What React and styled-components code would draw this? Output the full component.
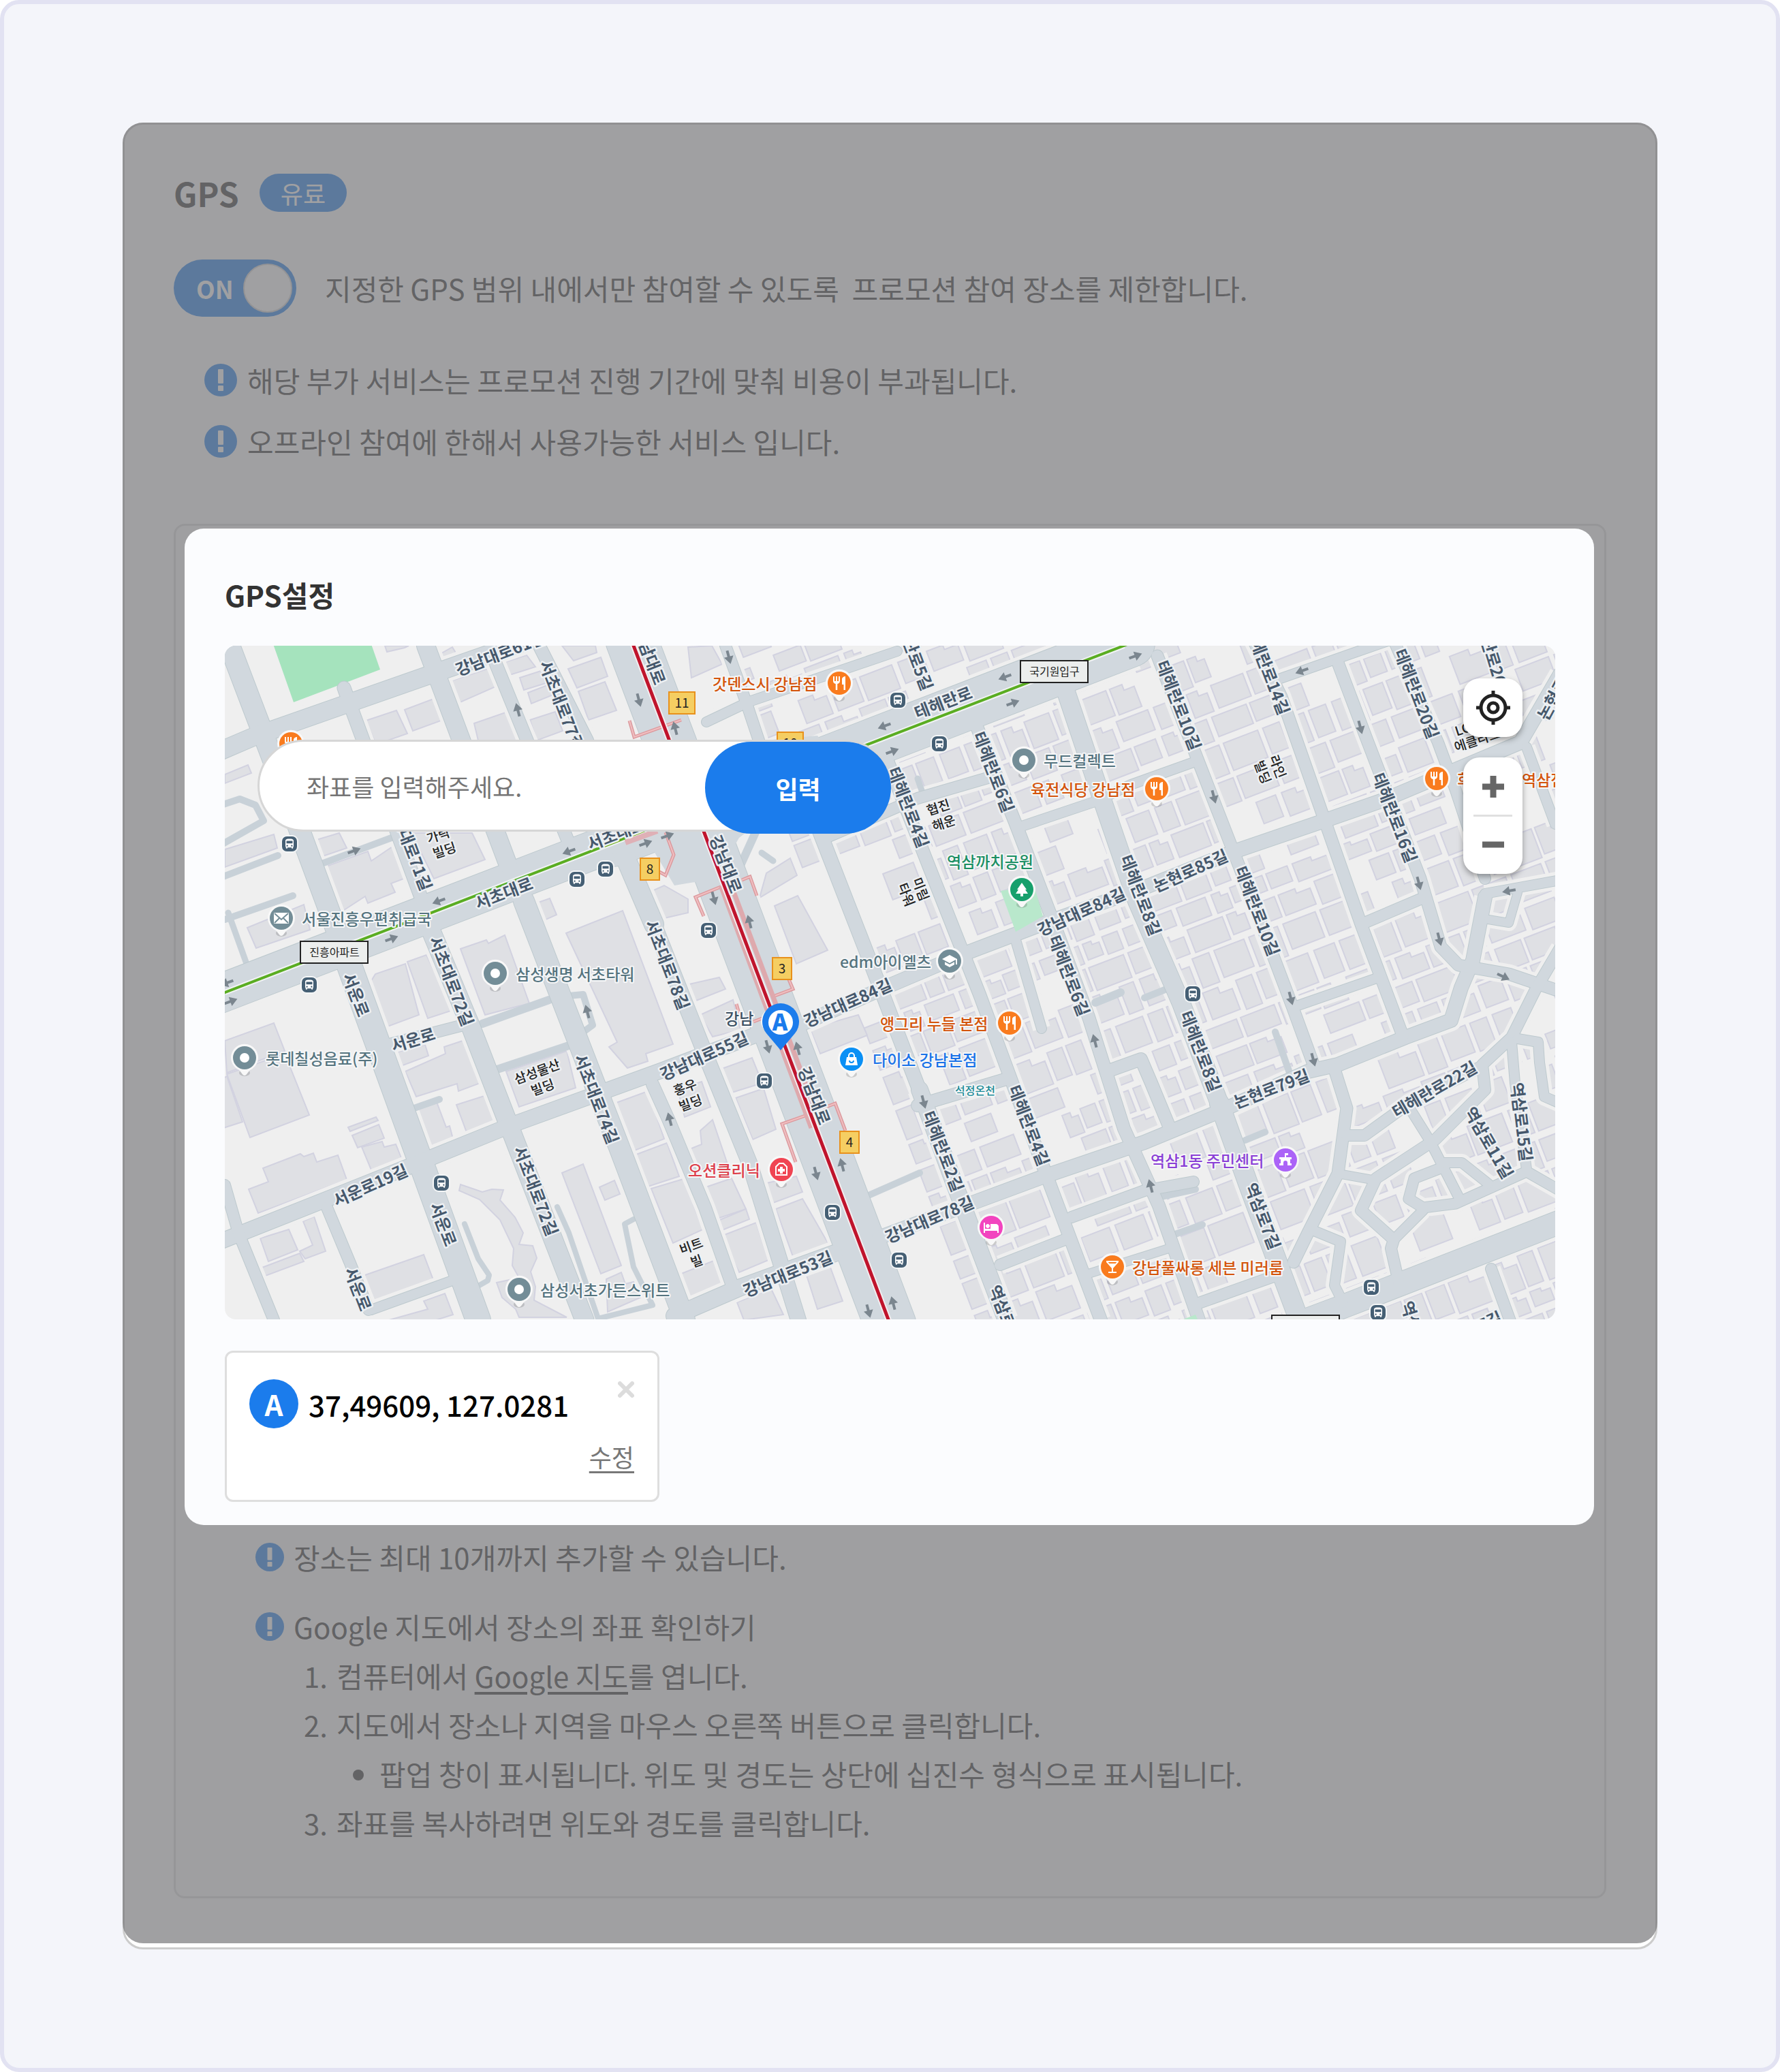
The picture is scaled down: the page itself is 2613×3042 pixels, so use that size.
import React, { useState } from 'react';
import styled, { createGlobalStyle } from 'styled-components';
import {
  MdRestaurant,
  MdLocalBar,
  MdPark,
  MdSchool,
  MdHotel,
  MdDirectionsBus,
} from 'react-icons/md';

const GlobalStyle = createGlobalStyle`
  * {
    box-sizing: border-box;
  }
  body {
    margin: 0;
    background: #fff;
    color: #333;
    font-family: 'Noto Sans CJK KR', 'Noto Sans', sans-serif;
    font-size: 42px;
  }
  button, input {
    font-family: inherit;
  }
`;

const Page = styled.main`
  min-height: 100vh;
  padding: 174px;
  border: 6px solid #e2e2f2;
  border-radius: 28px;
  background: #f4f5fa;
`;

const Card = styled.section`
  position: relative;
  padding: 72px;
  border: 3px solid #ccc;
  border-radius: 30px;
  background: #fff;
`;

const Scrim = styled.div`
  position: absolute;
  inset: -3px -3px 6px;
  z-index: 1;
  border-radius: 30px;
  background: rgba(119, 120, 122, 0.7);
`;

const Heading = styled.div`
  display: flex;
  align-items: center;
  gap: 30px;
  height: 56px;
  margin-bottom: 70px;
`;

const Title = styled.h1`
  margin: 0;
  font-size: 48px;
  line-height: 56px;
`;

const PaidBadge = styled.span`
  padding: 0 31px;
  border-radius: 28px;
  background: #1b7cec;
  color: #fff;
  font-size: 36px;
  line-height: 56px;
`;

const SwitchRow = styled.label`
  display: flex;
  align-items: center;
  gap: 42px;
  margin-bottom: 48px;
  line-height: 84px;
  white-space: pre-wrap;
`;

const Switch = styled.span`
  display: flex;
  align-items: center;
  justify-content: space-between;
  flex: none;
  width: 180px;
  height: 84px;
  padding: 0 6px 0 33px;
  border-radius: 42px;
  background: #1b7cec;
  color: #fff;
  font-size: 36px;
  font-weight: 700;
`;

const SwitchInput = styled.input`
  appearance: none;
  width: 72px;
  height: 72px;
  margin: 0;
  border: 2px solid #d4d4d4;
  border-radius: 50%;
  background: #fff;
`;

const Notices = styled.ul`
  margin: 0 0 76px;
  padding: 0 0 0 45px;
  list-style: none;
`;

const Notice = styled.li`
  display: flex;
  align-items: center;
  gap: 15px;
  line-height: 90px;
`;

const Section = styled.div`
  padding: 4px 15px 72px 13px;
  border: 3px solid #dcdcdc;
  border-radius: 16px;
  background: #fafbfc;
`;

const Dialog = styled.div`
  position: relative;
  z-index: 2;
  margin-bottom: 11px;
  padding: 67px 57px 34px 59px;
  border-radius: 28px;
  background: #fbfcfe;
`;

const DialogTitle = styled.h2`
  margin: 0 0 45px;
  font-size: 42px;
  line-height: 60px;
`;

const MapFrame = styled.div`
  position: relative;
  overflow: hidden;
  margin-bottom: 46px;
  border-radius: 16px;
`;

const MapCanvas = styled.svg`
  display: block;
  width: 100%;
  height: auto;
  background: #efefef;
`;

const SearchForm = styled.form`
  position: absolute;
  top: 138px;
  left: 48px;
  display: flex;
  width: 930px;
`;

const SearchInput = styled.input`
  flex: 1;
  min-width: 0;
  height: 135px;
  padding: 0 69px;
  border: 3px solid #d6d6d6;
  border-radius: 68px;
  background: #fff;
  font-size: 36px;
  outline: none;
  &::placeholder {
    color: #757575;
  }
`;

const SearchButton = styled.button`
  width: 273px;
  height: 135px;
  margin: 3px 0 0 -273px;
  border: none;
  border-radius: 68px;
  background: #1b7cec;
  color: #fff;
  font-size: 36px;
  font-weight: 700;
  cursor: pointer;
`;

const MapControls = styled.div`
  position: absolute;
  top: 48px;
  right: 48px;
  display: flex;
  flex-direction: column;
  gap: 30px;
`;

const ControlGroup = styled.div`
  display: flex;
  flex-direction: column;
  align-items: center;
  width: 87px;
  padding: 2px 0;
  border-radius: 24px;
  background: #fff;
  box-shadow: 0 4px 9px rgba(0, 0, 0, 0.35);
`;

const ControlButton = styled.button`
  display: flex;
  align-items: center;
  justify-content: center;
  width: 87px;
  height: 82px;
  padding: 0;
  border: none;
  background: none;
  cursor: pointer;
`;

const ControlDivider = styled.hr`
  width: 57px;
  height: 3px;
  margin: 0;
  border: none;
  background: #e0e0e0;
`;

const PlaceCard = styled.div`
  width: 638px;
  max-width: 100%;
  padding: 39px 34px 38px 33px;
  border: 3px solid #dedede;
  border-radius: 12px;
  background: #fff;
`;

const PlaceRow = styled.div`
  display: flex;
  align-items: center;
  gap: 15px;
  height: 72px;
  margin-bottom: 15px;
`;

const PlaceBadge = styled.span`
  width: 72px;
  border-radius: 50%;
  background: #1b7cec;
  color: #fff;
  font-weight: 700;
  line-height: 72px;
  text-align: center;
`;

const PlaceText = styled.span`
  flex: 1;
  color: #000;
  font-weight: 500;
`;

const RemoveButton = styled.button`
  display: flex;
  align-self: flex-start;
  padding: 3px 0;
  border: none;
  background: none;
  cursor: pointer;
`;

const EditButton = styled.button`
  display: block;
  margin-left: auto;
  padding: 0;
  border: none;
  background: none;
  color: #777;
  font-size: 36px;
  line-height: 52px;
  text-decoration: underline;
  text-underline-offset: 6px;
  cursor: pointer;
`;

const Guide = styled.div`
  padding-left: 104px;
  line-height: 72px;
`;

const GuideLine = styled.p`
  display: flex;
  align-items: center;
  gap: 14px;
  margin: 0 0 ${({ $spaced }) => ($spaced ? '30px' : '0')};
`;

const Steps = styled.ol`
  margin: 0;
  padding-left: 119px;
  list-style: none;
  counter-reset: step;
`;

const Step = styled.li`
  counter-increment: step;
  &::before {
    content: counter(step) '.';
    display: inline-block;
    width: 48px;
    margin-left: -48px;
  }
`;

const SubSteps = styled.ul`
  margin: 0;
  padding-left: 63px;
  list-style: disc;
`;

const MapLink = styled.a`
  color: inherit;
  text-underline-offset: 6px;
`;

const RoadLabel = styled.text`
  fill: #46586c;
  stroke: #edf0f3;
  stroke-width: 5px;
  stroke-linejoin: round;
  paint-order: stroke;
  font-size: 24px;
  font-weight: 700;
  text-anchor: middle;
  dominant-baseline: central;
`;

const BuildingLabel = styled(RoadLabel)`
  fill: #222;
  font-size: 19px;
  font-weight: 500;
`;

const PlaceLabel = styled.text`
  fill: ${({ $color }) => $color};
  stroke: #f6f7f8;
  stroke-width: 4px;
  stroke-linejoin: round;
  paint-order: stroke;
  font-size: ${({ $small }) => ($small ? '16px' : '23px')};
  font-weight: 500;
`;

const BadgeText = styled.text`
  fill: #222;
  font-size: ${({ $size }) => $size}px;
  text-anchor: middle;
`;

const MarkerLetter = styled.text`
  fill: #1b7cec;
  font-size: 34px;
  font-weight: 900;
  text-anchor: middle;
`;

const SLATE = '#738d97';
const ORANGE = '#f97b1e';

// [width, points]
const roads = [
  [75, '927,940 1307,1945'],
  [56, '320,1460 944,1220'],
  [70, '900,1237 1271,1094 1660,944'],
  [30, '337,948 429,1190 515,1423'],
  [36, '505,1396 702,1938'],
  [26, '625,948 746,1270'],
  [30, '769,1323 910,1687 1005,1938'],
  [19, '505,1010 528,1073 619,1320'],
  [27, '628,1355 691,1507 749,1657 858,1938'],
  [18, '728,975 836,1240'],
  [18, '790,945 862,1087 915,1240'],
  [28, '912,1245 960,1357'],
  [22, '955,1345 1039,1557 1100,1707 1172,1938'],
  [18, '958,1592 981,1643 1035,1773 1076,1890'],
  [26, '320,1104 376,1080 647,985 790,935'],
  [16, '560,1536 680,1505'],
  [22, '320,1824 602,1712 755,1650 970,1572 1108,1520'],
  [20, '1178,1503 1303,1448 1416,1400 1529,1357 1680,1303 1812,1250 1938,1207 2030,1175 2232,1090 2290,990'],
  [14, '1037,1060 1100,1030 1317,956'],
  [16, '1065,948 1095,1030 1115,1090'],
  [16, '1212,1230 1347,1172 1450,1142'],
  [14, '1500,1213 1607,1177 1660,1152 1755,1118'],
  [14, '1877,997 1960,968 2040,940'],
  [16, '330,1740 350,1810 402,1938'],
  [16, '480,1773 515,1857 541,1923'],
  [14, '545,1923 664,1880'],
  [24, '990,1932 1087,1890 1225,1840'],
  [20, '1290,1817 1425,1767 1533,1727 1680,1677 1794,1630 1920,1573 1964,1563 2063,1523 2130,1498 2145,1450 2162,1410 2180,1317'],
  [18, '1347,1623 1481,1583'],
  [18, '1625,1573 1675,1555 1690,1590 1716,1653'],
  [16, '1468,1857 1568,1818'],
  [16, '1573,1787 1680,1748 1752,1735'],
  [12, '1598,1870 1725,1830'],
  [16, '1760,1913 1881,1870'],
  [34, '1900,1945 1972,1918 2290,1794'],
  [20, '1195,1200 1269,1390 1356,1617'],
  [24, '1350,1600 1400,1735 1477,1938'],
  [18, '1304,1120 1364,1273 1438,1460 1533,1717 1616,1938'],
  [18, '1434,1067 1490,1207 1546,1353'],
  [14, '1488,1370 1529,1510'],
  [18, '1546,1353 1598,1493 1650,1657 1701,1770 1760,1938'],
  [26, '1564,1013 1620,1180 1669,1323 1734,1473 1790,1620'],
  [28, '1790,1620 1833,1740 1907,1938'],
  [17, '1699,963 1755,1107 1825,1287 1898,1480 1929,1565'],
  [17, '1840,940 1881,1023 1942,1197 1998,1357 2059,1520'],
  [17, '1964,973 2007,1087 2085,1290 2115,1390 2141,1417 2215,1430 2283,1453'],
  [16, '2046,940 2111,1090 2137,1160 2180,1290'],
  [14, '2241,1097 2283,1210'],
  [14, '2180,1312 2290,1292'],
  [16, '1998,1357 2085,1320'],
  [14, '1903,1477 2024,1435'],
  [16, '2290,1392 2254,1453 2219,1523 2176,1563 2180,1600 2107,1673 2020,1730 1998,1777 2046,1820 2042,1833 2055,1890'],
  [17, '1959,1570 1977,1627 1964,1723 1920,1810 1899,1853'],
  [16, '1977,1667 2003,1667 2068,1620 2172,1567'],
  [14, '2068,1625 2098,1673 2141,1757'],
  [15, '2120,1713 2076,1730 2068,1760 2089,1773 2137,1767 2241,1720 2290,1748'],
  [14, '2120,1707 2146,1707 2185,1738'],
  [14, '2089,1777 2046,1820'],
  [14, '2219,1530 2224,1590 2241,1717'],
  [14, '2228,1525 2258,1530 2260,1560 2267,1610 2290,1620'],
  [14, '1929,1807 1968,1823 1959,1887 1972,1913'],
  [12, '1964,1723 2020,1733'],
  [16, '2189,1863 2219,1945'],
  [12, '2228,1310 2215,1355 2185,1350'],
];

const serviceRoads = [
  [10, '325,1182 352,1173 375,1182 387,1205 325,1240'],
  [10, '325,1288 408,1256'],
  [10, '467,1270 580,1228'],
  [10, '330,1350 430,1315'],
  [9, '335,1340 362,1415'],
  [12, '708,1503 806,1468'],
  [12, '730,1570 835,1535'],
  [10, '835,1462 856,1460 870,1505 855,1516'],
  [10, '605,1628 645,1614'],
  [8, '682,1797 702,1848 718,1872 716,1880 702,1888'],
  [8, '818,1772 835,1810 878,1936 958,1916 930,1860 920,1812 917,1797 930,1790'],
  [10, '1275,1755 1350,1722'],
  [9, '1347,1143 1357,1172'],
  [9, '1118,1252 1135,1264'],
  [12, '1085,1275 1110,1220'],
  [10, '1680,1465 1710,1453'],
  [10, '1872,1515 1893,1575'],
  [10, '1828,1674 1857,1662'],
  [12, '1608,1472 1645,1457'],
  [10, '1700,1758 1755,1746'],
  [10, '1725,1812 1765,1798'],
];

const buildings = [
  '565,948 600,948 594,951 568,957',
  '641,963 664,950 670,960 645,969',
  '661,1000 734,976 741,1002 671,1033',
  '742,972 773,962 786,979 748,991',
  '763,995 794,985 801,1003 769,1013',
  '775,1017 806,1005 812,1020 780,1033',
  '834,982 882,965 892,993 847,1010',
  '849,1015 888,1001 905,1043 864,1057',
  '537,1058 582,1043 598,1077 552,1093',
  '594,1042 639,1025 650,1057 606,1073',
  '696,1062 745,1045 760,1087 702,1087',
  '778,1057 815,1045 826,1073 788,1087',
  '825,948 874,948 876,958 842,970',
  '476,1273 540,1250 545,1264 576,1243 593,1290 574,1297 580,1310 540,1326 536,1316 502,1338',
  '458,1235 498,1223 509,1245 465,1260',
  '330,1247 402,1225 407,1245 330,1273',
  '604,1223 693,1223 712,1262 637,1290',
  '330,1137 364,1123 369,1135 330,1150',
  '363,1362 446,1328 455,1365 376,1392',
  '790,1325 807,1319 817,1343 799,1351',
  '676,1393 714,1380 717,1385 741,1373 777,1473 712,1490',
  '831,1370 914,1337 988,1533 948,1547 951,1558 921,1568 894,1537 906,1530',
  '953,1310 975,1300 1010,1320 1010,1340 975,1348',
  '545,1440 551,1430 595,1415 615,1490 569,1507',
  '598,1412 626,1402 665,1483 628,1495',
  '330,1528 402,1502 418,1543 333,1575',
  '333,1577 418,1547 454,1637 367,1670',
  '325,1585 333,1580 356,1647 325,1657',
  '578,1546 624,1534 629,1550 586,1566',
  '595,1573 654,1547 652,1537 682,1527 705,1590 673,1602 671,1591 611,1610',
  '608,1630 641,1618 655,1655 660,1653 665,1672 630,1686',
  '670,1622 714,1608 729,1650 686,1665',
  '743,1573 832,1543 845,1597 762,1625',
  '365,1746 394,1735 386,1715 441,1694 446,1698 460,1693 465,1706 496,1696 509,1732 379,1781',
  '531,1684 561,1676 564,1684 581,1680 591,1704 566,1722 548,1725',
  '517,1667 556,1651 564,1671 525,1685',
  '511,1655 552,1640 555,1645 514,1661',
  '382,1818 424,1805 437,1835 394,1852',
  '445,1793 461,1786 478,1837 448,1848 440,1837 459,1828',
  '382,1862 440,1840 446,1852 387,1874',
  '533,1873 622,1842 636,1879 548,1912',
  '571,1938 628,1922 622,1910 653,1899 665,1930 640,1938',
  '825,1722 856,1709 912,1858 882,1870',
  '880,1743 902,1733 910,1753 888,1762',
  '902,1620 951,1602 975,1672 929,1690',
  '934,1695 979,1678 997,1727 951,1742',
  '956,1745 1003,1731 1032,1805 988,1825',
  '890,1878 912,1868 918,1885 930,1882 940,1905 892,1926',
  '1003,1447 1056,1435 1065,1452 1022,1469',
  '1028,1490 1076,1468 1087,1512 1046,1522',
  '1057,1570 1104,1553 1119,1590 1071,1605',
  '1080,1612 1121,1598 1139,1658 1105,1673',
  '1121,1738 1169,1727 1178,1750 1132,1767',
  '1139,1775 1178,1760 1223,1838 1167,1853',
  '1137,1330 1171,1315 1215,1395 1169,1415',
  '1115,1318 1125,1282 1160,1260 1170,1285',
  '1189,1510 1260,1490 1273,1520 1204,1547',
  '995,1600 1030,1588 1043,1625 1005,1640',
  '1005,1690 1030,1680 1028,1660 1046,1644 1067,1706 1020,1720',
  '1030,1745 1074,1730 1095,1775 1050,1790',
  '1047,1795 1095,1775 1100,1790 1050,1810',
  '1058,1815 1110,1795 1128,1850 1085,1868',
  '1000,1870 1050,1850 1068,1890 1008,1915',
  '1082,1912 1132,1892 1150,1930 1092,1938',
  '1180,1860 1215,1850 1237,1910 1200,1922',
  '1010,950 1045,948 1060,975 1015,995',
];

const arrows = [
  [938, 1028, 75], [760, 1042, -105], [1070, 965, 75], [991, 1069, -105],
  [1475, 994, 160], [1487, 1032, -20], [1298, 1066, 160], [1310, 1103, -20],
  [1667, 963, -20], [1911, 985, 160], [1997, 1068, 75], [1782, 1170, 75],
  [2083, 1297, 75], [2113, 1379, 75], [2215, 1308, 170], [2207, 1434, 25],
  [520, 1249, -20], [644, 1323, 160], [835, 1250, 160], [948, 1238, -20],
  [980, 1227, -20], [575, 1378, -20], [339, 1470, -20], [333, 1443, 160],
  [862, 1485, -105], [983, 1643, -105], [1048, 1319, 75], [1100, 1353, -105],
  [1127, 1537, 75], [1171, 1539, -105], [1198, 1723, 75], [1236, 1710, -105],
  [1275, 1925, 75], [1311, 1913, -105], [1356, 1618, 75], [1607, 1528, -105],
  [1895, 1466, 75], [1928, 1556, 75], [1689, 1741, -105],
];

const busStops = [
  [425, 1239], [454, 1446], [847, 1291], [889, 1276], [1318, 1028], [1379, 1092], [1040, 1366],
  [1122, 1587], [1222, 1780], [1320, 1850], [648, 1737], [1751, 1459], [2013, 1890], [2023, 1927],
];

const subwayPaths = [
  '924,1058 931,1082 1000,1057',
  '977,1222 989,1255 977,1285 968,1280',
  '1033,1345 1021,1317 1058,1302',
  '1089,1292 1101,1287 1111,1315',
  '1132,1464 1164,1452 1158,1438',
  '1081,1474 1085,1488',
  '1106,1500 1119,1495',
  '1182,1638 1148,1650 1168,1706',
  '1208,1627 1226,1620 1241,1660',
];

const exits = [
  { label: '11', x: 981, y: 1015, w: 40 },
  { label: '10', x: 1140, y: 1074, w: 40 },
  { label: '8', x: 939, y: 1259, w: 30 },
  { label: '3', x: 1133, y: 1405, w: 30 },
  { label: '4', x: 1232, y: 1660, w: 30 },
];

const stationSigns = [
  { label: '진흥아파트', x: 441, y: 1382 },
  { label: '국기원입구', x: 1498, y: 970 },
  { label: '', x: 1867, y: 1931 },
];

const roadLabels = [
  ['강남대로61길', 734, 958, -21],
  ['서초대로77길', 826, 1035, 69],
  ['강남대로', 955, 962, 69],
  ['테헤란로5길', 1341, 954, 69],
  ['테헤란로', 1384, 1030, -21],
  ['테헤란로6길', 1460, 1133, 69],
  ['테헤란로4길', 1335, 1185, 69],
  ['테헤란로10길', 1732, 1035, 69],
  ['테헤란로14길', 1862, 983, 69],
  ['테헤란로20길', 2081, 1018, 69],
  ['테헤란로26길', 2191, 960, 73],
  ['논현로', 2278, 1025, -62],
  ['테헤란로16길', 2049, 1200, 69],
  ['테헤란로8길', 1676, 1314, 69],
  ['논현로85길', 1747, 1277, -24],
  ['테헤란로10길', 1847, 1337, 69],
  ['테헤란로6길', 1571, 1432, 69],
  ['강남대로84길', 1587, 1337, -24],
  ['강남대로84길', 1244, 1471, -24],
  ['강남대로55길', 1033, 1549, -24],
  ['강남대로', 1067, 1268, 69],
  ['강남대로', 1197, 1608, 69],
  ['서초대로', 739, 1310, -21],
  ['서초대로', 904, 1223, -21],
  ['서초대로71길', 603, 1241, 69],
  ['서초대로72길', 664, 1440, 69],
  ['서초대로78길', 981, 1416, 69],
  ['서초대로74길', 877, 1613, 69],
  ['서초대로72길', 788, 1748, 69],
  ['서운로', 524, 1460, 69],
  ['서운로', 606, 1525, -17],
  ['서운로19길', 543, 1739, -24],
  ['서운로', 652, 1797, 69],
  ['서운로', 527, 1892, 69],
  ['강남대로53길', 1156, 1869, -22],
  ['강남대로78길', 1364, 1789, -23],
  ['테헤란로2길', 1386, 1690, 69],
  ['테헤란로4길', 1512, 1652, 69],
  ['역삼로7길', 1479, 1935, 69],
  ['테헤란로8길', 1764, 1543, 69],
  ['논현로79길', 1866, 1597, -21],
  ['테헤란로22길', 2105, 1598, -30],
  ['역삼로11길', 2187, 1677, 60],
  ['역삼로15길', 2235, 1647, 83],
  ['역삼로7길', 1855, 1785, 69],
  ['역삼로', 2076, 1942, 73],
  ['역삼로7길', 2156, 1952, -24],
];

const buildingLabels = [
  ['협진', 1377, 1184, -18],
  ['해운', 1385, 1207, -18],
  ['미림', 1353, 1305, 69],
  ['타워', 1332, 1313, 69],
  ['라인', 1877, 1125, 69],
  ['빌딩', 1855, 1133, 69],
  ['가락', 643, 1225, -18],
  ['빌딩', 652, 1247, -18],
  ['삼성물산', 788, 1572, -20],
  ['빌딩', 796, 1595, -20],
  ['홍우', 1005, 1595, -20],
  ['빌딩', 1013, 1618, -20],
  ['비트', 1014, 1828, -20],
  ['빌', 1022, 1850, -20],
  ['LG', 2147, 1069, -18],
  ['에클라트', 2168, 1085, -18],
];

const EnvelopeGlyph = () => (
  <g>
    <rect x="-11" y="-8" width="22" height="16" rx="1" fill="#fff" />
    <path d="M-10-7l10 9 10-9M-10 7l7-7M10 7l-7-7" fill="none" stroke={SLATE} strokeWidth="2" />
  </g>
);

const BagGlyph = () => (
  <g>
    <path d="M-7-3h14l2 12h-18z" fill="#fff" />
    <path d="M-4-2v-3a4 4 0 0 1 8 0v3" fill="none" stroke="#fff" strokeWidth="2" />
    <path d="M-3 2a3 3 0 0 0 6 0" fill="none" stroke="#0a90f5" strokeWidth="2" />
  </g>
);

const ClinicGlyph = () => (
  <g fill="none" stroke="#fff">
    <path d="M-8 8v-12l5-5h6l5 5v12z" strokeWidth="2" />
    <path d="M0-4v10M-5 1h10" strokeWidth="4" />
  </g>
);

const OfficeGlyph = () => (
  <path
    d="M-1-10h5v3h-3v3h8v3h-2v6h2v3h-6v-4a3 3 0 0 0-6 0v4h-6v-3h2v-6h-2v-3h8z"
    fill="#fff"
  />
);

const places = [
  { x: 427, y: 1092, color: ORANGE, icon: MdRestaurant },
  { x: 1232, y: 1003, color: ORANGE, icon: MdRestaurant, name: '갓덴스시 강남점', tx: 1046, text: '#d4550c' },
  { x: 1503, y: 1116, color: SLATE, name: '무드컬렉트', tx: 1532 },
  { x: 1698, y: 1158, color: ORANGE, icon: MdRestaurant, name: '육전식당 강남점', tx: 1513, text: '#d4550c' },
  { x: 2109, y: 1143, color: ORANGE, icon: MdRestaurant, name: '희', tx: 2139, text: '#d4550c' },
  { x: 1500, y: 1306, color: '#17a06c', icon: MdPark, name: '역삼까치공원', tx: 1390, ty: 1265, text: '#1b8f63' },
  { x: 1394, y: 1411, color: SLATE, icon: MdSchool, name: 'edm아이엘츠', tx: 1233 },
  { x: 1482, y: 1502, color: ORANGE, icon: MdRestaurant, name: '앵그리 누들 본점', tx: 1292, text: '#d4550c' },
  { x: 1250, y: 1555, color: '#0a90f5', glyph: BagGlyph, name: '다이소 강남본점', tx: 1281, text: '#1a73e8' },
  { x: 1147, y: 1717, color: '#f04452', glyph: ClinicGlyph, name: '오션클리닉', tx: 1010, text: '#dd3f4b' },
  { x: 1455, y: 1802, color: '#f244bf', icon: MdHotel },
  { x: 1633, y: 1860, color: ORANGE, icon: MdLocalBar, name: '강남풀싸롱 세븐 미러룸', tx: 1662, text: '#d4550c' },
  { x: 1887, y: 1703, color: '#ab63f7', glyph: OfficeGlyph, name: '역삼1동 주민센터', tx: 1689, text: '#8a3fd6' },
  { x: 413, y: 1348, color: SLATE, glyph: EnvelopeGlyph, name: '서울진흥우편취급국', tx: 443 },
  { x: 727, y: 1429, color: SLATE, name: '삼성생명 서초타워', tx: 757 },
  { x: 359, y: 1553, color: SLATE, name: '롯데칠성음료(주)', tx: 390 },
  { x: 762, y: 1893, color: SLATE, name: '삼성서초가든스위트', tx: 793 },
];

// Small lots east of the main street, laid out on the street grid.
const lots = (() => {
  let seed = 11;
  const rand = () => {
    seed = (seed * 16807) % 2147483647;
    return seed / 2147483647;
  };
  const tilt = (-21 * Math.PI) / 180;
  const shapes = [];
  let v = -120;
  while (v < 1500) {
    const rowHeight = 28 + rand() * 24;
    let u = -100;
    while (u < 1300) {
      const w = 22 + rand() * 34;
      const h = rowHeight - rand() * 7;
      const px = 1180 + (u + w / 2) * Math.cos(tilt) - v * Math.sin(tilt);
      const py = 1000 + (u + w / 2) * Math.sin(tilt) + v * Math.cos(tilt);
      const street = 930 + 0.378 * (py - 948);
      const taken = px < 1290 && py > 1240 && py < 1560;
      const visible = px < 2320 && py > 920 && py < 1960 && px > street + 62;
      const notch = rand() > 0.68;
      if (visible && !taken && rand() > 0.1) {
        const cut = notch
          ? `h${w * 0.55}v${h * 0.22}h${w * 0.45}v${h * 0.78}h${-w}z`
          : `h${w}v${h}h${-w}z`;
        shapes.push(`M${u} ${v}${cut}`);
      }
      u += w + 5 + rand() * 5;
    }
    v += rowHeight + 6;
  }
  return shapes.join('');
})();

const NoticeIcon = ({ size }) => (
  <svg width={size} height={size} viewBox="0 0 48 48" aria-hidden="true">
    <circle cx="24" cy="24" r="24" fill="#1b7cec" />
    <rect x="20" y="8" width="8" height="21" rx="1" fill="#fff" />
    <rect x="20" y="32" width="8" height="8" rx="1" fill="#fff" />
  </svg>
);

const Pin = ({ x, y, color, icon: Icon, glyph: Glyph }) => (
  <g transform={`translate(${x} ${y})`}>
    <ellipse cx="0" cy="22" rx="8" ry="5" fill="#000" opacity="0.15" />
    <path d="M0 26c-3 0-4-4-8-8a20 20 0 1 1 16 0c-4 4-5 8-8 8z" fill="#f8f8f8" />
    <circle r="17" fill={color} />
    {Icon && <Icon x="-12" y="-12" size={24} color="#fff" />}
    {Glyph && <Glyph />}
    {!Icon && !Glyph && <circle r="7" fill="#fff" />}
  </g>
);

const StreetMap = () => (
  <MapCanvas viewBox="330 948 1953 989" role="img" aria-label="강남역 주변 지도">
    <g fill="#dfe0e4" stroke="#d2d2e0" strokeWidth="2">
      <path d={lots} transform="translate(1180 1000) rotate(-21)" />
      {buildings.map((points) => (
        <polygon key={points} points={points} />
      ))}
      <path d="M676 1739l32 11 14-4 17 1-5 15 22 25 12 23-6 17 20 2 6 18-9 20 7 22-2 20 48 25h-70l-5-12-20-17-8-22 33-7-10-18 2-25-20-42-30-30-30-13z" />
    </g>
    <polygon points="399,940 543,940 558,983 431,1031" fill="#a5e3bd" />

    {/* casing, outline, surface */}
    <g fill="none" strokeLinejoin="round">
      {roads.map(([width, points]) => (
        <polyline key={points} points={points} stroke="#efefef" strokeWidth={width + 12} />
      ))}
      {serviceRoads.map(([width, points]) => (
        <polyline key={points} points={points} stroke="#c8d1d8" strokeWidth={width} strokeLinecap="round" />
      ))}
      {roads.map(([width, points]) => (
        <polyline key={points} points={points} stroke="#bdc9ce" strokeWidth={width + 2} strokeLinecap="round" />
      ))}
      {roads.map(([width, points]) => (
        <polyline key={points} points={points} stroke="#d1d8de" strokeWidth={width} strokeLinecap="round" />
      ))}
      <polygon points="850,1256 925,1190 930,1120 1010,1110 1090,1090 1200,1080 1240,1130 1150,1180 1085,1230 1050,1290 990,1300 960,1250" fill="#d1d8de" />
    </g>
    <polygon points="1469,1308 1518,1300 1531,1345 1491,1368" fill="#b9e8cc" />
    <polygon points="1737,1937 1755,1930 1758,1937" fill="#b9e8cc" />

    <g fill="none">
      <polyline points="330,1457 1650,948" stroke="#f1f3f4" strokeWidth="8" />
      <polyline points="320,1461 1660,944" stroke="#5aad22" strokeWidth="4" />
      <g stroke="#dc9a9e" strokeWidth="5">
        {subwayPaths.map((points) => (
          <polyline key={points} points={points} />
        ))}
      </g>
      <g stroke="#f0bfc1" strokeWidth="2">
        {subwayPaths.map((points) => (
          <polyline key={points} points={points} />
        ))}
      </g>
      <polyline points="918,1237 965,1220" stroke="#dfb0b6" strokeWidth="8" />
      <polyline points="1058,1300 1191,1656" stroke="#dea9ad" strokeWidth="7" />
      <polyline points="1072,1296 1205,1650" stroke="#dea9ad" strokeWidth="7" />
      <polyline points="927,940 1307,1945" stroke="#f3eef0" strokeWidth="9" />
      <polyline points="927,940 1307,1945" stroke="#c0142c" strokeWidth="5" />
    </g>

    <g fill="#7b868f">
      {arrows.map(([x, y, angle]) => (
        <path
          key={`${x}-${y}`}
          d="M-10-2h9v-5l11 7-11 7v-5h-9z"
          transform={`translate(${x} ${y}) rotate(${angle})`}
        />
      ))}
    </g>

    {roadLabels.map(([label, x, y, angle]) => (
      <RoadLabel key={`${x}-${y}`} transform={`translate(${x} ${y}) rotate(${angle})`}>{label}</RoadLabel>
    ))}
    {buildingLabels.map(([label, x, y, angle]) => (
      <BuildingLabel key={`${x}-${y}`} transform={`translate(${x} ${y}) rotate(${angle})`}>{label}</BuildingLabel>
    ))}

    {busStops.map(([x, y]) => (
      <g key={`${x}-${y}`} transform={`translate(${x} ${y})`}>
        <rect x="-13" y="-13" width="26" height="26" rx="9" fill="#f4f6f7" />
        <rect x="-11" y="-11" width="22" height="22" rx="7" fill="#455f74" />
        <MdDirectionsBus x="-9" y="-9" size={18} color="#fff" />
      </g>
    ))}

    {exits.map(({ label, x, y, w }) => (
      <g key={label}>
        <rect x={x + 1} y={y + 1} width={w - 2} height="32" fill="#f5ce62" stroke="#e8911c" strokeWidth="2" />
        <BadgeText $size={19} x={x + w / 2} y={y + 24}>{label}</BadgeText>
      </g>
    ))}
    {stationSigns.map(({ label, x, y }) => (
      <g key={x}>
        <rect x={x} y={y} width="99" height="32" fill="#eceeed" stroke="#222" strokeWidth="2" />
        <BadgeText $size={16} x={x + 50} y={y + 22}>{label}</BadgeText>
      </g>
    ))}

    {places.map((place) => (
      <g key={`${place.x}-${place.y}`}>
        <Pin {...place} />
        {place.name && (
          <PlaceLabel $color={place.text || '#55747f'} x={place.tx} y={(place.ty || place.y + 1) + 9}>
            {place.name}
          </PlaceLabel>
        )}
      </g>
    ))}
    <PlaceLabel $color="#d4550c" x="2234" y="1154">역삼점</PlaceLabel>
    <PlaceLabel $color="#3d5163" x="1064" y="1504">강남</PlaceLabel>
    <PlaceLabel $color="#1a8a96" $small x="1402" y="1607">석정온천</PlaceLabel>

    <circle cx="1136" cy="1499" r="19" fill="#f8f8f8" />
    <path d="M1146 1542l-21-25a27 27 0 1 1 42 0z" fill="#1b7cec" />
    <circle cx="1146" cy="1501" r="18" fill="#fff" />
    <MarkerLetter x="1145" y="1513">A</MarkerLetter>
  </MapCanvas>
);

const App = () => {
  const [enabled, setEnabled] = useState(true);
  const [query, setQuery] = useState('');

  return (
    <>
      <GlobalStyle />
      <Page>
        <Card>
          <Heading>
            <Title>GPS</Title>
            <PaidBadge>유료</PaidBadge>
          </Heading>
          <SwitchRow>
            <Switch>
              ON
              <SwitchInput
                type="checkbox"
                role="switch"
                checked={enabled}
                onChange={(e) => setEnabled(e.target.checked)}
              />
            </Switch>
            <span>{'지정한 GPS 범위 내에서만 참여할 수 있도록  프로모션 참여 장소를 제한합니다.'}</span>
          </SwitchRow>
          <Notices>
            <Notice>
              <NoticeIcon size={48} />
              해당 부가 서비스는 프로모션 진행 기간에 맞춰 비용이 부과됩니다.
            </Notice>
            <Notice>
              <NoticeIcon size={48} />
              오프라인 참여에 한해서 사용가능한 서비스 입니다.
            </Notice>
          </Notices>

          <Section>
            <Dialog role="dialog" aria-labelledby="gps-dialog-title">
              <DialogTitle id="gps-dialog-title">GPS설정</DialogTitle>
              <MapFrame>
                <StreetMap />
                <SearchForm onSubmit={(e) => e.preventDefault()}>
                  <SearchInput
                    type="text"
                    aria-label="좌표"
                    placeholder="좌표를 입력해주세요."
                    value={query}
                    onChange={(e) => setQuery(e.target.value)}
                  />
                  <SearchButton type="submit">입력</SearchButton>
                </SearchForm>
                <MapControls>
                  <ControlGroup>
                    <ControlButton type="button" aria-label="현재 위치">
                      <svg width="50" height="50" viewBox="0 0 50 50" fill="none" stroke="#222">
                        <circle cx="25" cy="25" r="18" strokeWidth="5" />
                        <circle cx="25" cy="25" r="7" strokeWidth="5" />
                        <path d="M25 0v6M25 44v6M0 25h6M44 25h6" strokeWidth="5" />
                      </svg>
                    </ControlButton>
                  </ControlGroup>
                  <ControlGroup>
                    <ControlButton type="button" aria-label="확대">
                      <svg width="32" height="32" viewBox="0 0 32 32" stroke="#666" strokeWidth="9">
                        <path d="M16 0v32M0 16h32" />
                      </svg>
                    </ControlButton>
                    <ControlDivider />
                    <ControlButton type="button" aria-label="축소">
                      <svg width="32" height="32" viewBox="0 0 32 32" stroke="#666" strokeWidth="9">
                        <path d="M0 16h32" />
                      </svg>
                    </ControlButton>
                  </ControlGroup>
                </MapControls>
              </MapFrame>
              <PlaceCard>
                <PlaceRow>
                  <PlaceBadge>A</PlaceBadge>
                  <PlaceText>37,49609, 127.0281</PlaceText>
                  <RemoveButton type="button" aria-label="삭제">
                    <svg width="24" height="24" viewBox="0 0 24 24" stroke="#dcdcdc" strokeWidth="6" strokeLinecap="round">
                      <path d="M3 3l18 18M21 3L3 21" />
                    </svg>
                  </RemoveButton>
                </PlaceRow>
                <EditButton type="button">수정</EditButton>
              </PlaceCard>
            </Dialog>

            <Guide>
              <GuideLine $spaced>
                <NoticeIcon size={42} />
                장소는 최대 10개까지 추가할 수 있습니다.
              </GuideLine>
              <GuideLine>
                <NoticeIcon size={42} />
                Google 지도에서 장소의 좌표 확인하기
              </GuideLine>
              <Steps>
                <Step>
                  컴퓨터에서 <MapLink href="#google-maps">Google 지도</MapLink>를 엽니다.
                </Step>
                <Step>
                  지도에서 장소나 지역을 마우스 오른쪽 버튼으로 클릭합니다.
                  <SubSteps>
                    <li>팝업 창이 표시됩니다. 위도 및 경도는 상단에 십진수 형식으로 표시됩니다.</li>
                  </SubSteps>
                </Step>
                <Step>좌표를 복사하려면 위도와 경도를 클릭합니다.</Step>
              </Steps>
            </Guide>
          </Section>
          <Scrim />
        </Card>
      </Page>
    </>
  );
};

export default App;
